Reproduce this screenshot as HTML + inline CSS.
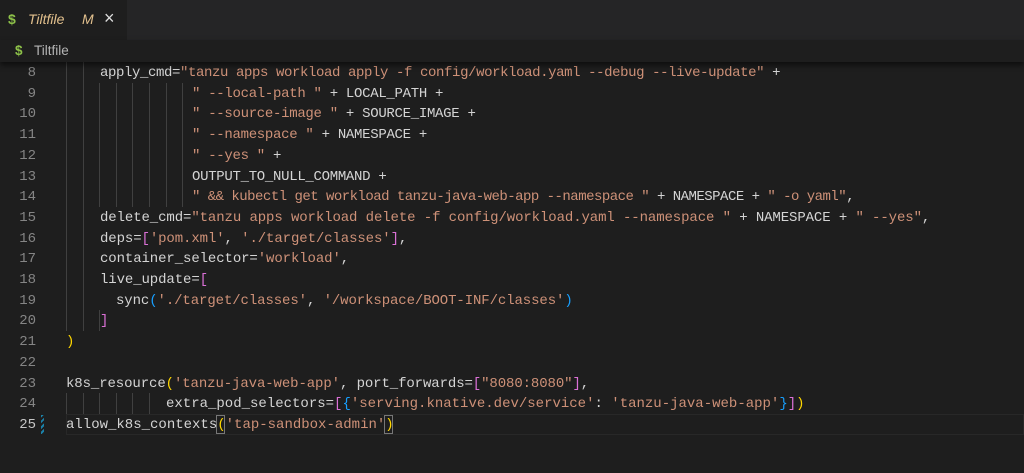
<!DOCTYPE html>
<html><head><meta charset="utf-8"><style>
*{margin:0;padding:0;box-sizing:border-box}
body{width:1024px;height:473px;background:#1e1e1e;overflow:hidden;position:relative;font-family:"Liberation Sans",sans-serif}
.tabs{position:absolute;left:0;top:0;width:1024px;height:40px;background:#252526}
.tab{position:absolute;left:0;top:0;width:127px;height:40px;background:#1e1e1e}
.tab span{position:absolute;top:11px;font-size:14px}
.bc{position:absolute;left:0;top:40px;width:1024px;height:22px;background:#1e1e1e;box-shadow:0 3px 5px rgba(0,0,0,.55);z-index:5}
.bc span{position:absolute;top:3px;font-size:13.5px;color:#b4b4b4}
.ln{position:absolute;left:0;width:36px;text-align:right;font-family:"Liberation Mono",monospace;font-size:14px;color:#858585;line-height:20.7px}
.l{position:absolute;font-family:"Liberation Mono",monospace;font-size:14px;color:#d4d4d4;white-space:pre;line-height:20.7px}
.s{color:#ce9178}.y{color:#ffd700}.p{color:#da70d6}.b{color:#179fff}
.g{position:absolute;width:1px;background:#404040}
</style></head><body>
<div class="tabs"><div class="tab">
<span style="left:8px;color:#8dc149;font-weight:bold">$</span>
<span style="left:28px;color:#e2c08d;font-style:italic">Tiltfile</span>
<span style="left:82px;color:#e2c08d;font-style:italic">M</span>
<span style="left:104px;top:8px;color:#ddd;font-size:18px">×</span>
</div></div>
<div class="bc"><span style="left:15px;color:#8dc149;font-weight:bold">$</span><span style="left:34px">Tiltfile</span></div>

<div class="g" style="left:66px;top:62px;height:269px"></div>
<div class="g" style="left:83px;top:62px;height:269px"></div>
<div class="g" style="left:99px;top:83px;height:124px"></div>
<div class="g" style="left:116px;top:83px;height:124px"></div>
<div class="g" style="left:132px;top:83px;height:124px"></div>
<div class="g" style="left:149px;top:83px;height:124px"></div>
<div class="g" style="left:166px;top:83px;height:124px"></div>
<div class="g" style="left:182px;top:83px;height:124px"></div>
<div class="g" style="left:99px;top:310px;height:21px"></div>
<div class="g" style="left:66px;top:393px;height:21px"></div>
<div class="g" style="left:83px;top:393px;height:21px"></div>
<div class="g" style="left:99px;top:393px;height:21px"></div>
<div class="g" style="left:116px;top:393px;height:21px"></div>
<div class="g" style="left:132px;top:393px;height:21px"></div>
<div class="g" style="left:149px;top:393px;height:21px"></div>

<div style="position:absolute;left:66px;top:414px;width:958px;height:21px;border:1px solid #282828"></div>
<div style="position:absolute;left:41px;top:415px;width:3px;height:19px;background:repeating-linear-gradient(135deg,#1b81a8 0 2px,transparent 2px 4px)"></div>
<div style="position:absolute;left:216px;top:415px;width:9px;height:19px;border:1px solid #777"></div>
<div style="position:absolute;left:384px;top:415px;width:9px;height:19px;border:1px solid #777"></div>

<div class="ln" style="top:63px">8<br>9<br>10<br>11<br>12<br>13<br>14<br>15<br>16<br>17<br>18<br>19<br>20<br>21<br>22<br>23<br>24<br><span style="color:#c6c6c6">25</span></div>

<div class="l" style="left:100px;top:63px;letter-spacing:-.4px">apply_cmd=<span class="s">"tanzu apps workload apply -f config/workload.yaml --debug --live-update"</span> +</div>
<div class="l" style="left:192px;top:83.7px;letter-spacing:-.3px"><span class="s">" --local-path "</span> + LOCAL_PATH +</div>
<div class="l" style="left:192px;top:104.4px;letter-spacing:-.3px"><span class="s">" --source-image "</span> + SOURCE_IMAGE +</div>
<div class="l" style="left:192px;top:125.1px;letter-spacing:-.3px"><span class="s">" --namespace "</span> + NAMESPACE +</div>
<div class="l" style="left:192px;top:145.8px;letter-spacing:-.3px"><span class="s">" --yes "</span> +</div>
<div class="l" style="left:192px;top:166.5px;letter-spacing:-.3px">OUTPUT_TO_NULL_COMMAND +</div>
<div class="l" style="left:192px;top:187.2px;letter-spacing:-.52px"><span class="s">" &amp;&amp; kubectl get workload tanzu-java-web-app --namespace "</span> + NAMESPACE + <span class="s">" -o yaml"</span>,</div>
<div class="l" style="left:100px;top:207.9px;letter-spacing:-.1px">delete_cmd=<span class="s">"tanzu apps workload delete -f config/workload.yaml --namespace "</span> + NAMESPACE + <span class="s">" --yes"</span>,</div>
<div class="l" style="left:100px;top:228.6px;letter-spacing:-.1px">deps=<span class="p">[</span><span class="s">'pom.xml'</span>, <span class="s">'./target/classes'</span><span class="p">]</span>,</div>
<div class="l" style="left:100px;top:249.3px;letter-spacing:-.1px">container_selector=<span class="s">'workload'</span>,</div>
<div class="l" style="left:100px;top:270px;letter-spacing:-.1px">live_update=<span class="p">[</span></div>
<div class="l" style="left:116px;top:290.7px;letter-spacing:-.1px">sync<span class="b">(</span><span class="s">'./target/classes'</span>, <span class="s">'/workspace/BOOT-INF/classes'</span><span class="b">)</span></div>
<div class="l" style="left:100px;top:311.4px"><span class="p">]</span></div>
<div class="l" style="left:66px;top:332.1px"><span class="y">)</span></div>
<div class="l" style="left:66px;top:373.5px;letter-spacing:-.1px">k8s_resource<span class="y">(</span><span class="s">'tanzu-java-web-app'</span>, port_forwards=<span class="p">[</span><span class="s">"8080:8080"</span><span class="p">]</span>,</div>
<div class="l" style="left:166px;top:394.2px">extra_pod_selectors=<span class="p">[</span><span class="b">{</span><span class="s">'serving.knative.dev/service'</span>: <span class="s">'tanzu-java-web-app'</span><span class="b">}</span><span class="p">]</span><span class="y">)</span></div>
<div class="l" style="left:66px;top:414.9px">allow_k8s_contexts<span class="y">(</span><span class="s">'tap-sandbox-admin'</span><span class="y">)</span></div>
</body></html>
